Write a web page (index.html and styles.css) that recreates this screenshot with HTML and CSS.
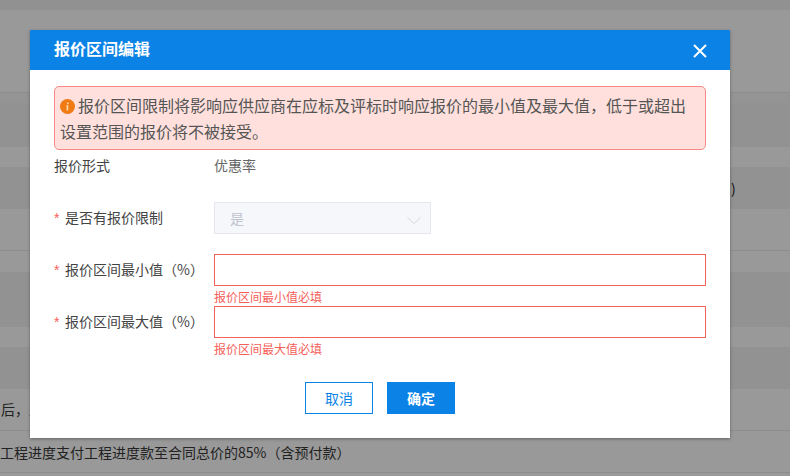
FILE: index.html
```html
<!DOCTYPE html>
<html lang="en">
<head>
    <meta charset="UTF-8">
    <meta name="viewport" content="width=device-width, initial-scale=1.0">
    <title>报价区间编辑</title>
    <link rel="stylesheet" href="styles.css">
</head>
<body>
    <main class="page">
        <div class="band band-top"></div>
        <div class="band band-a"></div>
        <div class="band band-b"></div>
        <div class="band band-c"></div>
        <div class="band band-d"><span class="edge-text">)</span></div>
        <div class="band band-e"></div>
        <div class="band band-f"></div>
        <div class="band band-g"></div>
        <div class="band band-h"></div>
        <div class="band band-i"></div>
        <div class="band band-j"></div>
        <div class="band band-k"><span class="row-text row-text-shift">后，工程</span></div>
        <div class="band band-l"><span class="row-text">工程进度支付工程进度款至合同总价的85%（含预付款）</span></div>
        <div class="band band-m"></div>
    </main>

    <div class="modal">
        <div class="modal-header">
            <h2>报价区间编辑</h2>
            <svg class="close-icon" width="14" height="14" viewBox="0 0 14 14">
                <path d="M1 1 L13 13 M13 1 L1 13" stroke="#fff" stroke-width="2" fill="none"/>
            </svg>
        </div>
        <div class="modal-body">
            <div class="alert"><svg class="info-icon" width="15" height="15" viewBox="0 0 15 15">
                    <circle cx="7.5" cy="7.5" r="7.5" fill="#f07a13"/>
                    <rect x="7" y="3.5" width="1.6" height="1.6" fill="#fbd9a8"/>
                    <rect x="6.6" y="6" width="1.6" height="5.5" fill="#fbd9a8"/>
                </svg>报价区间限制将影响应供应商在应标及评标时响应报价的最小值及最大值，低于或超出设置范围的报价将不被接受。</div>

            <div class="form-row row-plain">
                <label>报价形式</label>
                <span class="value">优惠率</span>
            </div>
            <div class="form-row row-select">
                <label><i>*</i>是否有报价限制</label>
                <div class="select">
                    <span>是</span>
                    <svg width="14" height="8" viewBox="0 0 14 8">
                        <path d="M0.5 0.5 L7 6.5 L13.5 0.5" stroke="#d5d7dd" stroke-width="1" fill="none"/>
                    </svg>
                </div>
            </div>
            <div class="form-row row-input">
                <label><i>*</i>报价区间最小值（%）</label>
                <div class="field">
                    <input type="text">
                    <p class="error">报价区间最小值必填</p>
                </div>
            </div>
            <div class="form-row row-input">
                <label><i>*</i>报价区间最大值（%）</label>
                <div class="field">
                    <input type="text">
                    <p class="error">报价区间最大值必填</p>
                </div>
            </div>

            <div class="actions">
                <button type="button" class="btn-cancel">取消</button>
                <button type="button" class="btn-ok">确定</button>
            </div>
        </div>
    </div>
</body>
</html>
```

FILE: styles.css
```css
* {
    margin: 0;
    padding: 0;
    box-sizing: border-box;
}

body {
    width: 790px;
    height: 476px;
    overflow: hidden;
    position: relative;
    font-family: "Noto Sans CJK SC", "Liberation Sans", sans-serif;
    font-size: 14px;
    color: #333;
    background-color: #999;
}

/* dimmed table behind the dialog */
.band {
    border-bottom: 1px solid #8d8d8d;
}

.band-top { height: 10px; background-color: #919191; border: none; }
.band-a { height: 83px; background-color: #999; }
.band-b { height: 10px; background-color: #949494; border: none; }
.band-c { height: 44px; background-color: #929292; border: none; }
.band-d { height: 20px; background-color: #999; border: none; position: relative; }
.band-e { height: 42px; background-color: #929292; border: none; }
.band-f { height: 42px; background-color: #999; }
.band-g { height: 21px; background-color: #999; border: none; }
.band-h { height: 55px; background-color: #929292; border: none; }
.band-i { height: 20px; background-color: #999; border: none; }
.band-j { height: 42px; background-color: #929292; border: none; }
.band-k { height: 42px; background-color: #999; line-height: 41px; }
.band-l { height: 42px; background-color: #999; line-height: 42px; }
.band-m { height: 3px; background-color: #999; border: none; }

.row-text {
    display: block;
    color: #222;
    white-space: nowrap;
}

.row-text-shift {
    padding-left: 1px;
}

.edge-text {
    position: absolute;
    left: 731px;
    top: 31px;
    color: #111;
}

/* dialog */
.modal {
    position: absolute;
    left: 30px;
    top: 30px;
    width: 700px;
    height: 408px;
    background-color: #fff;
    box-shadow: 0 1px 3px rgba(0, 0, 0, 0.35);
}

.modal-header {
    height: 40px;
    padding: 0 23px 0 24px;
    display: flex;
    justify-content: space-between;
    align-items: center;
    background-color: #0b83e6;
    color: #fff;
}

.modal-header h2 {
    font-size: 16px;
    line-height: 37px;
    height: 40px;
    font-weight: bold;
}

.close-icon {
    margin-top: 2px;
}

.modal-body {
    padding: 16px 24px 0;
}

.alert {
    height: 64px;
    padding: 4.5px 6px 4px 5px;
    font-size: 16px;
    line-height: 26px;
    color: #555;
    background-color: #ffe0dc;
    border: 1px solid #f78989;
    border-radius: 5px;
}

.info-icon {
    vertical-align: -2px;
    margin-right: 3px;
}

.form-row {
    display: flex;
    height: 52px;
}

.form-row label {
    width: 160px;
    flex-shrink: 0;
    line-height: 30px;
    color: #444;
}

.form-row label i {
    display: inline-block;
    width: 11px;
    font-family: "Liberation Sans", sans-serif;
    font-style: normal;
    color: #f5605a;
}

.row-plain {
    line-height: 30px;
}

.value {
    color: #666;
}

.select {
    width: 217px;
    height: 32px;
    padding: 0 9px 0 15px;
    display: flex;
    justify-content: space-between;
    align-items: center;
    color: #c0c4cc;
    background-color: #f5f7fa;
    border: 1px solid #e4e7ed;
}

.select span {
    margin-top: -1px;
}

.select svg {
    margin-top: 6px;
}

.field {
    flex: 1;
}

.field input {
    display: block;
    width: 100%;
    height: 32px;
    border: 1px solid #f5605a;
    outline: none;
}

.error {
    font-size: 12px;
    line-height: 22px;
    color: #f5605a;
}

.actions {
    display: flex;
    justify-content: center;
    gap: 14px;
    margin-top: 24px;
}

.actions button {
    width: 68px;
    height: 32px;
    font-family: inherit;
    font-size: 14px;
}

.btn-cancel {
    color: #0b83e6;
    background-color: #fff;
    border: 1px solid #0b83e6;
}

.btn-ok {
    color: #fff;
    font-weight: bold;
    background-color: #0b83e6;
    border: 1px solid #0b83e6;
}
```
